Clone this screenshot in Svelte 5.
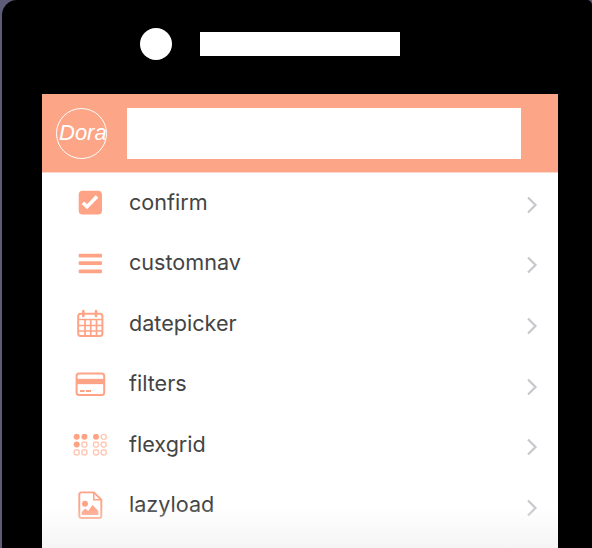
<script>
  const items = ['confirm', 'customnav', 'datepicker', 'filters', 'flexgrid', 'lazyload'];
  const dotRows = [0, 1, 2];
  const filled = (col, row) => (row === 0) || (row === 1 && col === 0);
</script>

<div class="page">
  <div class="phone">
    <div class="top">
      <div class="camera"></div>
      <div class="speaker"></div>
    </div>
    <div class="screen">
      <header class="head">
        <div class="logo">Dora</div>
        <div class="search"></div>
      </header>
      <ul class="list">
        {#each items as item}
          <li class="row">
            <span class="icon">
              {#if item === 'confirm'}
                <svg width="26" height="26" viewBox="0 0 26 26"><rect x="1.700" y="0.700" width="23.300" height="23.700" rx="4" fill="#fea386"/><path d="M6 12.800l4 4L20 6.500" fill="none" stroke="#fff" stroke-width="3.600"/></svg>
              {:else if item === 'customnav'}
                <svg width="26" height="22" viewBox="0 0 26 22"><g fill="#fea386"><rect x="1.700" y="0.800" width="23.300" height="3.600" rx="1"/><rect x="1.700" y="8.200" width="23.300" height="3.900" rx="1"/><rect x="1.700" y="16.400" width="23.300" height="3.900" rx="1"/></g></svg>
              {:else if item === 'datepicker'}
                <svg width="28" height="30" viewBox="0 0 28 30"><g fill="none" stroke="#fea386"><rect x="2.200" y="4.700" width="24.200" height="22.200" rx="2.500" stroke-width="2"/><path d="M7.300 2v5M20 2v5" stroke-width="2.600" stroke-linecap="round"/><path d="M3 10.500h23M3 16.500h23M3 22h23M9 10v17M14.700 10v17M20.500 10v17" stroke-width="1.700"/></g></svg>
              {:else if item === 'filters'}
                <svg width="32" height="26" viewBox="0 0 32 26"><g fill="none" stroke="#fea386"><rect x="2.600" y="1.600" width="27.600" height="21.400" rx="2.500" stroke-width="2"/><path d="M2 9.500h28" stroke-width="5.300"/><path d="M6 19h4.500M12 19h5" stroke-width="1.800"/></g></svg>
              {:else if item === 'flexgrid'}
                <svg width="36" height="24" viewBox="0 0 36 24">
                  {#each [4.700, 24] as ox, g}
                    {#each dotRows as r}
                      {#each [0, 1] as c}
                        {@const on = g === 0 ? filled(c, r) : (r === 0 && c === 0)}
                        <circle cx={ox + c * 7.700} cy={2.800 + r * 7.800} r={on ? 3 : 2.600} fill={on ? '#fea386' : 'none'} stroke="#fec9b6" stroke-width={on ? 0 : 1.400}/>
                      {/each}
                    {/each}
                  {/each}
                </svg>
              {:else}
                <svg width="26" height="30" viewBox="0 0 26 30"><path d="M4.300 1.400h12.500l7.500 7.300V25a2 2 0 0 1-2 2H4.300a2 2 0 0 1-2-2V3.400a2 2 0 0 1 2-2z" fill="none" stroke="#fea386" stroke-width="1.900"/><path d="M16.800 1.600v7.200h7.300" fill="none" stroke="#fea386" stroke-width="1.500"/><circle cx="8" cy="12.700" r="3" fill="#fea386"/><path d="M4.700 24v-3l3.500-3.500 3 2.500 4.300-6 5.800 6v4z" fill="#fea386"/></svg>
              {/if}
            </span>
            <span class="label">{item}</span>
            <svg class="chev" width="12" height="18" viewBox="0 0 12 18"><path d="M2 1.500L9.500 9 2 16.500" fill="none" stroke="#c8c8cc" stroke-width="2.200"/></svg>
          </li>
        {/each}
      </ul>
      <div class="fade"></div>
    </div>
  </div>
</div>

<style>
  :global(body) {
    margin: 0;
    background: #5c5c78;
  }
  .page {
    width: 592px;
    height: 548px;
    overflow: hidden;
    padding-left: 2px;
    box-sizing: border-box;
  }
  .phone {
    width: 590px;
    height: 548px;
    background: #000;
    border-radius: 15px 5px 0 0;
    padding-left: 40px;
    box-sizing: border-box;
  }
  .top {
    height: 94px;
    display: flex;
    align-items: flex-start;
    padding: 28px 0 0 98px;
    box-sizing: border-box;
  }
  .camera {
    width: 32px;
    height: 32px;
    border-radius: 50%;
    background: #fff;
  }
  .speaker {
    width: 200px;
    height: 24px;
    margin: 4px 0 0 28px;
    background: #fff;
  }
  .screen {
    width: 516px;
    height: 454px;
    background: #fff;
    position: relative;
    overflow: hidden;
  }
  .head {
    height: 79px;
    background: #fca587;
    display: flex;
    align-items: center;
    padding-left: 14px;
    box-sizing: border-box;
    border-bottom: 1px solid #fdd9cb;
  }
  .logo {
    width: 51px;
    height: 51px;
    border: 1.500px solid #fff;
    border-radius: 50%;
    box-sizing: border-box;
    color: #fff;
    font: italic 22px/48px "Liberation Sans", sans-serif;
    text-indent: 2px;
    text-align: center;
    white-space: nowrap;
  }
  .search {
    width: 393.500px;
    height: 51px;
    margin-left: 20px;
    background: #fff;
  }
  .list {
    list-style: none;
    margin: 0;
    padding: 0;
  }
  .row {
    height: 60.600px;
    display: flex;
    align-items: center;
    position: relative;
  }
  .icon {
    width: 87px;
    padding-left: 9px;
    box-sizing: border-box;
    display: flex;
    justify-content: center;
  }
  .label {
    flex: 1;
    font: 21.600px/1 Inter, sans-serif;
    color: #444;
    padding-bottom: 2px;
  }
  .chev {
    margin-right: 20px;
    margin-top: 3px;
  }
  .fade {
    position: absolute;
    left: 0;
    right: 0;
    bottom: 0;
    height: 42px;
    background: linear-gradient(#fff0, #f5f5f5);
  }
</style>
